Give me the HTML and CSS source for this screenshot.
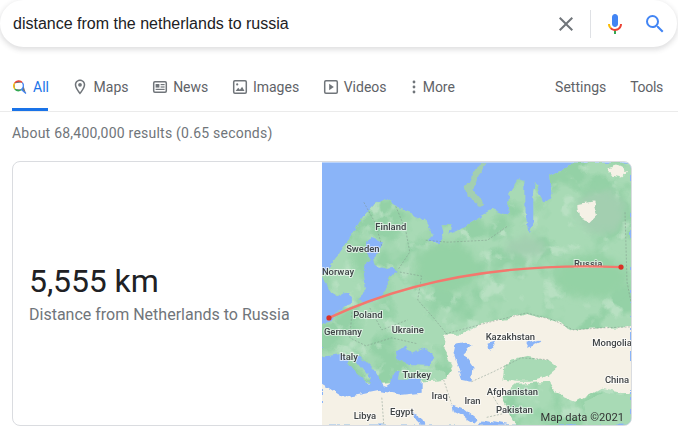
FILE: index.html
```html
<!DOCTYPE html>
<html lang="en">
<head>
  <meta charset="UTF-8" />
  <title>distance from the netherlands to russia</title>
  <link rel="stylesheet" href="styles.css">
</head>
<body>
  <div class="searchbar">
    <div class="query">distance from the netherlands to russia</div>
    <svg class="bar-icon" viewBox="0 0 24 24"><path fill="#70757a" d="M19 6.41L17.59 5 12 10.59 6.41 5 5 6.41 10.59 12 5 17.59 6.41 19 12 13.41 17.59 19 19 17.59 13.41 12z"/></svg>
    <span class="divider"></span>
    <svg class="bar-icon" viewBox="0 0 24 24">
      <path fill="#4285f4" d="m12 15c1.66 0 3-1.31 3-2.97v-7.02c0-1.66-1.34-3.01-3-3.01s-3 1.34-3 3.01v7.02c0 1.66 1.34 2.97 3 2.97z"/>
      <path fill="#34a853" d="m11 18.08h2v3.92h-2z"/>
      <path fill="#fbbc05" d="m7.05 16.87c-1.27-1.33-2.05-2.83-2.05-4.87h2c0 1.45 0.56 2.42 1.47 3.38v0.32l-1.15 1.18z"/>
      <path fill="#ea4335" d="m12 16.93a4.97 5.25 0 0 1 -3.54 -1.55l-1.41 1.49c1.26 1.34 3.02 2.13 4.95 2.13 3.87 0 6.99-2.92 6.99-7h-1.99c0 2.92-2.24 4.93-5 4.93z"/>
    </svg>
    <svg class="bar-icon search-btn" viewBox="0 0 24 24"><path fill="#4285f4" d="M15.5 14h-.79l-.28-.27A6.471 6.471 0 0 0 16 9.5 6.5 6.5 0 1 0 9.5 16c1.61 0 3.09-.59 4.23-1.57l.27.28v.79l5 4.99L20.49 19l-4.99-5zm-6 0C7.01 14 5 11.99 5 9.5S7.01 5 9.5 5 14 7.01 14 9.5 11.99 14 9.5 14z"/></svg>
  </div>

  <div class="nav">
    <a class="tab active">
      <svg class="tab-icon" viewBox="0 0 16 16" fill="none" stroke-width="1.3">
        <path stroke="#ea4335" d="M2.6 4.2A5 5 0 0 1 10.4 3.6"/>
        <path stroke="#fbbc05" d="M2.6 4.2A5 5 0 0 0 2.8 10"/>
        <path stroke="#34a853" d="M2.8 10A5 5 0 0 0 9.4 10.6"/>
        <path stroke="#4285f4" d="M10.4 3.6A5 5 0 0 1 9.4 10.6L14 14.6"/>
      </svg>
      All
    </a>
    <a class="tab">
      <svg class="tab-icon pin" viewBox="0 0 24 24"><path d="M12 2C8.13 2 5 5.13 5 9c0 5.25 7 13 7 13s7-7.75 7-13c0-3.87-3.13-7-7-7zM7 9c0-2.76 2.24-5 5-5s5 2.24 5 5c0 2.88-2.88 7.19-5 9.88C9.92 16.21 7 11.85 7 9z"/><circle cx="12" cy="9" r="2.5"/></svg>
      Maps
    </a>
    <a class="tab">
      <svg class="tab-icon" viewBox="0 0 16 16"><rect class="frame" x="1.7" y="2.7" width="12.6" height="10.6" rx="1.2"/><rect x="3.6" y="5" width="3.8" height="3.6"/><rect x="8.6" y="5" width="4" height="1.2"/><rect x="8.6" y="7.4" width="4" height="1.2"/><rect x="3.6" y="9.8" width="9" height="1.2"/></svg>
      News
    </a>
    <a class="tab">
      <svg class="tab-icon" viewBox="0 0 16 16"><rect class="frame" x="1.7" y="1.7" width="12.6" height="12.6" rx="1.2"/><circle cx="5.2" cy="5.4" r="1.1"/><path d="M3.6 12l2.6-3.2 1.7 2 2.2-3 2.4 4.2z"/></svg>
      Images
    </a>
    <a class="tab">
      <svg class="tab-icon" viewBox="0 0 16 16"><rect class="frame" x="1.7" y="1.7" width="12.6" height="12.6" rx="1.2"/><path d="M6.2 4.8v6.4l4.6-3.2z"/></svg>
      Videos
    </a>
    <a class="tab more">
      <svg class="dots" viewBox="0 0 4 16"><circle cx="2" cy="3" r="1.4"/><circle cx="2" cy="8" r="1.4"/><circle cx="2" cy="13" r="1.4"/></svg>
      More
    </a>
    <div class="nav-right">
      <a class="tab settings">Settings</a>
      <a class="tab tools">Tools</a>
    </div>
  </div>

  <div class="stats">About 68,400,000 results (0.65 seconds)</div>

  <div class="card">
    <div class="answer">
      <div class="km">5,555 km</div>
      <div class="label">Distance from Netherlands to Russia</div>
    </div>
    <svg class="map" viewBox="0 0 310 264">
      <defs>
        <filter id="coast" x="0" y="0" width="100%" height="100%" color-interpolation-filters="sRGB">
          <feTurbulence type="fractalNoise" baseFrequency="0.09" numOctaves="3" seed="4"/>
          <feDisplacementMap in="SourceGraphic" scale="7" xChannelSelector="R" yChannelSelector="G"/>
          <feGaussianBlur stdDeviation="0.5"/>
        </filter>
        <filter id="mottle-dark" x="0" y="0" width="100%" height="100%" color-interpolation-filters="sRGB">
          <feTurbulence type="fractalNoise" baseFrequency="0.026" numOctaves="3" seed="11"/>
          <feColorMatrix values="0 0 0 0 0.58  0 0 0 0 0.82  0 0 0 0 0.65  6 0 0 0 -2.8"/>
        </filter>
        <filter id="mottle-light" x="0" y="0" width="100%" height="100%" color-interpolation-filters="sRGB">
          <feTurbulence type="fractalNoise" baseFrequency="0.05" numOctaves="3" seed="23"/>
          <feColorMatrix values="0 0 0 0 0.72  0 0 0 0 0.88  0 0 0 0 0.76  6 0 0 0 -3.5"/>
        </filter>
        <filter id="haze"><feGaussianBlur stdDeviation="4"/></filter>
        <filter id="fine"><feGaussianBlur stdDeviation="0.3"/></filter>
        <clipPath id="eurasia">
          <path d="M0,114 L12,98 L28,76 L40,56 L52,42 L62,36 L74,44 L90,50 L104,60 L112,72 L106,78 L116,84 L122,72 L120,62 L130,62 L128,72 L140,66 L150,60 L164,52 L172,48 L186,54 L188,30 L196,18 L204,20 L204,50 L207,72 L212,60 L212,30 L214,20 L222,42 L231,36 L228,14 L240,8 L250,0 L310,0 L310,264 L0,264 Z"/>
        </clipPath>
      </defs>
      <rect class="sea" width="310" height="264"/>
      <g filter="url(#coast)">
        <rect class="land" width="310" height="264" clip-path="url(#eurasia)"/>
        <g clip-path="url(#eurasia)">
          <rect width="310" height="264" filter="url(#mottle-dark)"/>
          <rect width="310" height="264" filter="url(#mottle-light)"/>
          <g filter="url(#haze)">
            <ellipse class="land-dark" cx="125" cy="105" rx="32" ry="26"/>
            <ellipse class="land-dark" cx="40" cy="95" rx="10" ry="18"/>
            <ellipse class="land-dark" cx="270" cy="115" rx="36" ry="22"/>
            <ellipse class="land-grey" cx="280" cy="50" rx="24" ry="22"/>
            <ellipse class="land-grey" cx="205" cy="85" rx="20" ry="10"/>
          </g>
        </g>
        <path class="land-grey" d="M162,0 L152,8 L144,24 L146,34 L158,44 L162,42 L152,28 L156,14 L166,2 Z"/>
        <!-- desert, steppe -->
        <path class="sand" d="M124,172 L140,172 L165,161 L190,156 L205,151 L232,158 L252,168 L280,166 L310,165 L310,232 L280,226 L255,240 L235,232 L228,220 L196,222 L180,236 L195,264 L0,264 L0,218 L60,222 L122,218 L132,204 L122,186 Z"/>
        <path class="sand" d="M256,43 L272,40 L276,52 L268,60 L258,56 Z"/>
        <path class="sand" d="M286,6 L296,3 L306,8 L300,14 L290,12 Z"/>
        <path class="land" d="M190,198 L206,194 L226,198 L236,206 L224,216 L210,220 L196,220 L182,218 L184,206 Z"/>
        <path class="land" d="M262,240 L284,230 L310,236 L310,264 L268,264 Z"/>
        <path class="land" d="M74,208 L100,206 L122,208 L124,218 L96,220 L76,218 Z"/>
        <!-- seas -->
        <path class="sea" d="M0,116 L14,135 L22,130 L30,136 L30,142 L24,144 L16,150 L8,160 L0,161 Z"/>
        <path class="sea" d="M43,82 L52,76 L60,80 L58,90 L50,98 L56,108 L70,106 L76,110 L66,116 L66,128 L58,136 L42,140 L36,136 L44,128 L42,112 L47,96 Z"/>
        <path class="sea" d="M0,195 L18,192 L24,198 L32,208 L42,218 L46,222 L48,216 L40,206 L32,196 L38,194 L50,206 L58,216 L62,226 L68,222 L72,210 L78,208 L76,218 L100,218 L100,231 L80,233 L58,229 L22,236 L0,222 Z"/>
        <path class="sea" d="M74,190 L84,184 L90,192 L104,186 L114,196 L106,203 L84,202 L76,198 Z"/>
        <path class="sea" d="M134,182 L144,180 L150,184 L142,192 L152,206 L150,220 L140,218 L136,204 L132,192 Z"/>
        <path class="sea" d="M131,243 L140,246 L155,258 L152,261 L142,255 L132,250 Z"/>
        <path class="sea" d="M90,250 L94,250 L102,264 L97,264 Z"/>
        <path class="sea" d="M156,264 L160,259 L174,261 L188,264 Z"/>
        <path class="sea" d="M166,182 L172,180 L174,186 L168,188 Z"/>
        <path class="sea" d="M204,182 L218,178 L220,180 L206,186 Z"/>
      </g>
      <!-- borders -->
      <g class="borders">
        <path d="M42,40 L54,62 L60,84"/>
        <path d="M74,44 L84,68 L88,90 L76,108"/>
        <path d="M104,78 L126,80 L166,78 L186,64"/>
        <path d="M78,110 L100,114 L96,138 L112,156 L125,172"/>
        <path d="M30,150 L28,176 L44,184 L70,176 L96,182"/>
        <path d="M48,146 L60,168 L86,158"/>
        <path d="M124,172 L165,161 L205,151 L232,158 L252,168 L280,166 L310,165"/>
        <path d="M150,220 L172,210 L200,196 L228,198"/>
        <path d="M122,218 L130,242"/>
        <path d="M170,232 L182,252 L164,256"/>
        <path d="M60,236 L62,264"/>
        <path d="M304,50 L306,120 L310,140"/>
      </g>
      <g class="places" filter="url(#fine)">
        <text x="69" y="68">Finland</text>
        <text x="41" y="90">Sweden</text>
        <text x="16" y="113">Norway</text>
        <text x="267" y="105">Russia</text>
        <text x="46" y="156">Poland</text>
        <text x="21" y="173">Germany</text>
        <text x="86" y="171">Ukraine</text>
        <text x="189" y="178">Kazakhstan</text>
        <text x="291" y="184">Mongolia</text>
        <text x="27" y="198">Italy</text>
        <text x="95" y="216">Turkey</text>
        <text x="296" y="221">China</text>
        <text x="191" y="233">Afghanistan</text>
        <text x="118" y="237">Iraq</text>
        <text x="151" y="242">Iran</text>
        <text x="193" y="251">Pakistan</text>
        <text x="43" y="257">Libya</text>
        <text x="80" y="253">Egypt</text>
      </g>
      <!-- route -->
      <path class="route" d="M7,156 Q130,98 300,105"/>
      <circle class="stop" cx="7" cy="156" r="2.6"/>
      <circle class="stop" cx="300" cy="105" r="2.6"/>
      <text class="credit" x="303" y="259" filter="url(#fine)">Map data ©2021</text>
    </svg>
  </div>
</body>
</html>
```

FILE: styles.css
```css
body {
  margin: 0;
  width: 678px;
  height: 430px;
  overflow: hidden;
  background: #fff;
  font-family: Roboto, Arial, sans-serif;
}

.searchbar {
  display: flex;
  align-items: center;
  width: 677px;
  height: 47px;
  box-sizing: border-box;
  padding: 0 10px 0 13px;
  background: #fff;
  border-radius: 24px;
  box-shadow: 0 2px 5px 1px rgba(64, 60, 67, 0.16);
}

.query {
  flex: 1;
  font-family: "Liberation Sans", Arial, sans-serif;
  font-size: 16px;
  color: #202124;
}

.bar-icon {
  width: 24px;
  height: 24px;
}

.divider {
  width: 1px;
  height: 28px;
  margin: 0 12px;
  background: #dfe1e5;
}

.search-btn {
  margin-left: 16px;
}

.nav {
  display: flex;
  gap: 23.6px;
  height: 46px;
  margin-top: 18px;
  padding: 0 15px 0 12px;
  border-bottom: 1px solid #ebebeb;
}

.tab {
  display: flex;
  align-items: center;
  gap: 5px;
  box-sizing: border-box;
  height: 46px;
  padding-bottom: 2px;
  font-size: 14px;
  color: #5f6368;
}

.tab.active {
  width: 36px;
  color: #1a73e8;
  border-bottom: 3px solid #1a73e8;
  padding-bottom: 0;
}

.tab.more {
  gap: 7px;
  margin-left: 1.5px;
}

.tab.tools {
  letter-spacing: -0.3px;
}

.tab-icon {
  width: 16px;
  height: 16px;
  flex-shrink: 0;
  fill: #70757a;
}

.tab-icon.pin {
  width: 18px;
  height: 18px;
  margin-left: -1px;
  margin-right: 0;
}

.frame {
  fill: none;
  stroke: #70757a;
  stroke-width: 1.5;
}

.dots {
  width: 4px;
  height: 16px;
  fill: #70757a;
}

.nav-right {
  display: flex;
  gap: 24px;
  margin-left: auto;
}

.stats {
  margin: 11px 0 0 12px;
  font-size: 14px;
  line-height: 20px;
  letter-spacing: 0.23px;
  color: #70757a;
}

.card {
  display: flex;
  width: 620px;
  height: 265px;
  box-sizing: border-box;
  margin: 18px 0 0 12px;
  border: 1px solid #dadce0;
  border-radius: 8px;
  overflow: hidden;
}

.answer {
  flex: 1;
  display: flex;
  flex-direction: column;
  justify-content: center;
  padding-left: 16px;
}

.km {
  font-size: 32px;
  line-height: 40px;
  letter-spacing: -0.1px;
  color: #202124;
}

.label {
  margin-top: 2px;
  font-size: 16px;
  line-height: 24px;
  color: #70757a;
}

.map {
  width: 309px;
  height: 264px;
  flex-shrink: 0;
}

.sea { fill: #8ab4f8; }
.land { fill: #a8dab5; }
.land-dark { fill: #94d2a5; }
.land-grey { fill: #a3cfb0; }
.sand { fill: #f5f1e6; }

.borders path {
  fill: none;
  stroke: #7d9488;
  stroke-width: 0.5;
  stroke-dasharray: 2 1.5;
}

.route {
  fill: none;
  stroke: #f4776d;
  stroke-width: 2.4;
  stroke-linecap: round;
}

.stop { fill: #d93025; }

.places text {
  font-family: Roboto, Arial, sans-serif;
  font-size: 9.5px;
  font-weight: 500;
  text-anchor: middle;
  fill: #3f4447;
  stroke: rgba(255, 255, 255, 0.6);
  stroke-width: 2px;
  paint-order: stroke;
}

.credit {
  font-family: Roboto, Arial, sans-serif;
  font-size: 11.2px;
  text-anchor: end;
  fill: #333;
}
```
